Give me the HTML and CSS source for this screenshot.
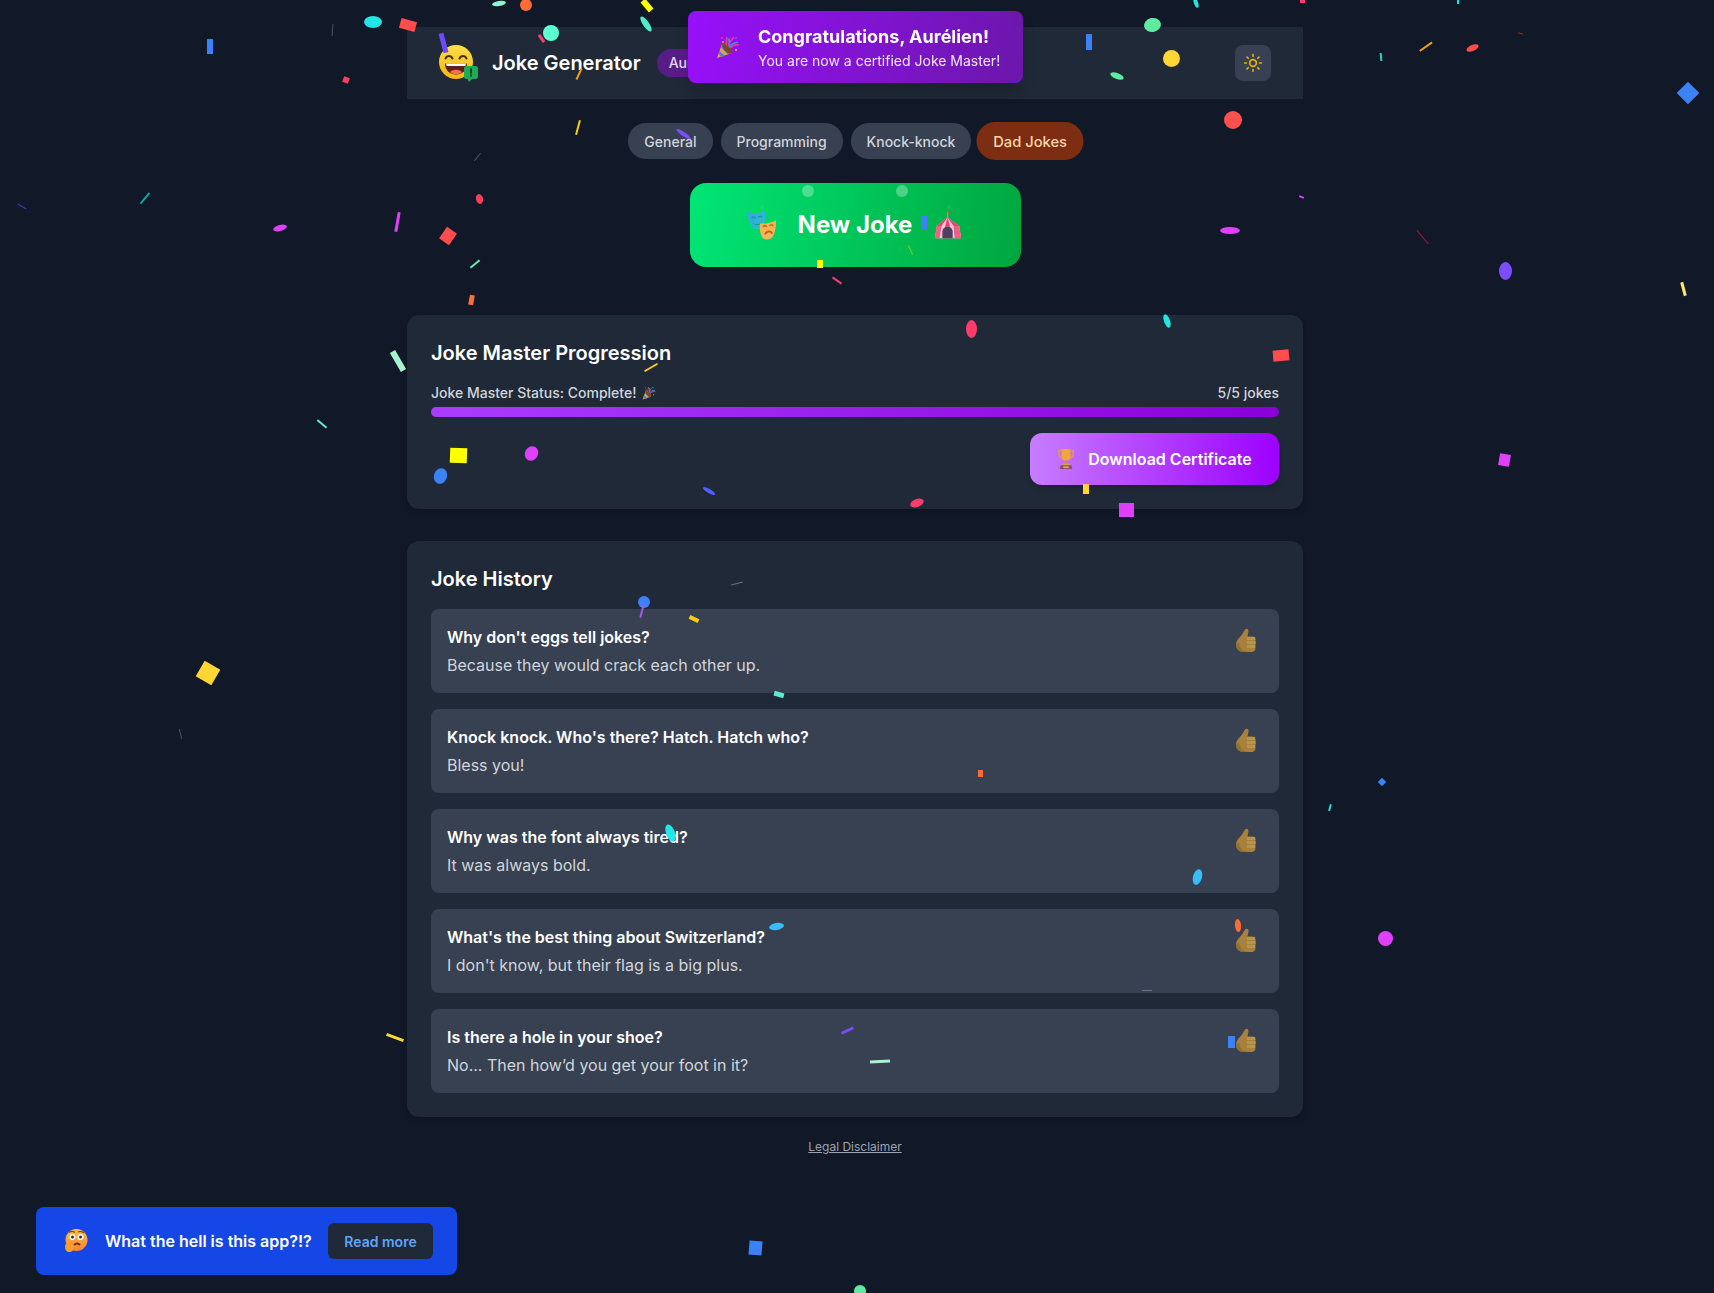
FILE: index.html
```html
<!DOCTYPE html>
<html lang="en">
<head>
<meta charset="utf-8">
<title>Joke Generator</title>
<link rel="stylesheet" href="styles.css">
</head>
<body>
<div class="page">
  <header class="topbar">
    <div class="brand">
      <svg class="logo" viewBox="0 0 40 38" aria-hidden="true">
        <defs><linearGradient id="fc" x1="0" y1="0" x2="0" y2="1"><stop offset="0" stop-color="#fde047"/><stop offset="1" stop-color="#f5b50f"/></linearGradient></defs>
        <circle cx="17" cy="17" r="17" fill="url(#fc)"/>
        <path d="M6.5 13.5c1.5-3.5 5.5-3.5 7 0M20.5 13.5c1.5-3.5 5.500-3.500 7 0" fill="none" stroke="#4a3410" stroke-width="2" stroke-linecap="round"/>
        <path d="M6 18.500h22c0 7-5 11-11 11s-11-4-11-11z" fill="#5b2412"/>
        <path d="M7 18.500h20l-.6 2.500H7.600z" fill="#fff"/>
        <path d="M11 27c3-3 9-3 12 0-3 3-9 3-12 0z" fill="#f0705a"/>
        <rect x="25" y="21" width="14" height="13" rx="2.500" fill="#1faa59"/>
        <path d="M28 33h6l-4 4z" fill="#1faa59"/>
        <rect x="31" y="23.500" width="2" height="5" fill="#0b3d20"/>
        <rect x="31" y="29.500" width="2" height="2" fill="#0b3d20"/>
      </svg>
      <h1 class="brand-title">Joke Generator</h1>
      <span class="user-pill">Aurélien</span>
    </div>
    <button class="theme-btn" aria-label="Toggle theme">
      <svg viewBox="0 0 24 24" class="sun"><circle cx="12" cy="12" r="4"/><path d="M12 2v2M12 20v2M4.900 4.900l1.400 1.400M17.700 17.700l1.400 1.400M2 12h2M20 12h2M4.900 19.100l1.400-1.400M17.700 6.300l1.400-1.400"/></svg>
    </button>
  </header>

  <nav class="tabs">
    <button class="tab">General</button>
    <button class="tab">Programming</button>
    <button class="tab">Knock-knock</button>
    <button class="tab tab-active">Dad Jokes</button>
  </nav>

  <div class="cta-row">
    <button class="cta">
      <svg class="cta-icon" viewBox="0 0 32 32" aria-hidden="true">
        <defs>
          <linearGradient id="mb" x1="0" y1="0" x2="1" y2="1"><stop offset="0" stop-color="#3b9dff"/><stop offset="1" stop-color="#27c4c0"/></linearGradient>
          <linearGradient id="mo" x1="0" y1="0" x2="0" y2="1"><stop offset="0" stop-color="#f4b04a"/><stop offset="1" stop-color="#fbb65c"/></linearGradient>
        </defs>
        <path d="M1 2c6 2 12 2 18-1 1 8 0 14-3 18-3 2-7 2-10 0C3 15 1 9 1 2z" fill="url(#mb)"/>
        <path d="M5 9c1-2 3-2 4 0M12 8c1-2 3-2 4 0" fill="none" stroke="#12a46e" stroke-width="1.500"/>
        <path d="M6 13c2 3 7 3 10-1-1 5-8 6-10 1z" fill="#12a46e"/>
        <path d="M14 14c6 1 11 0 17-3 0 8-1 14-4 18-3 3-7 3-10 1-3-4-4-10-3-16z" fill="url(#mo)"/>
        <path d="M17 18c1-1.500 3-1.500 4 0M24 17c1-1.500 3-1.500 4 0" fill="none" stroke="#b8651c" stroke-width="1.500"/>
        <path d="M19 26c2-4 6-4 8-1" fill="none" stroke="#b8651c" stroke-width="2"/>
      </svg>
      <span class="cta-label">New Joke</span>
      <svg class="cta-icon tent" viewBox="0 0 32 32" aria-hidden="true">
        <path d="M15.500 2v8" stroke="#e0952b" stroke-width="1.200"/>
        <path d="M16 2l4 1.500-4 1.500z" fill="#e8463f"/>
        <path d="M15.500 8L4 17l-2 13h28l-2-13z" fill="#f3c5d6"/>
        <path d="M15.500 8L4 17h5zM15.500 8L13 17h5zM15.500 8L22 17h6z" fill="#ec3f6d"/>
        <path d="M4 17l-2 13h5l2-13zM13 17l-1 13h8l-2-13zM22 17l1 13h7l-2-13z" fill="#ee5f86"/>
        <path d="M10 30v-7a5.500 5.500 0 0 1 11 0v7z" fill="#50405f"/>
      </svg>
    </button>
  </div>

  <section class="card progress-card">
    <h2 class="card-title">Joke Master Progression</h2>
    <div class="status-row">
      <span class="status-text">Joke Master Status: Complete!
        <svg class="inline-popper" viewBox="0 0 24 24" aria-hidden="true"><use href="#popper"/></svg>
      </span>
      <span>5/5 jokes</span>
    </div>
    <div class="bar"></div>
    <div class="cert-row">
      <button class="cert-btn">
        <svg class="trophy" viewBox="0 0 20 24" aria-hidden="true">
          <path d="M2 3h16v3c0 3-2 5-4 5H6C4 11 2 9 2 6z" fill="none" stroke="#e8a13c" stroke-width="1.500"/>
          <path d="M5 1h10v7c0 4-2 6-5 6S5 12 5 8z" fill="#f0a63e"/>
          <path d="M9 13h2v4H9z" fill="#d88a2e"/>
          <path d="M6 17h8v2H6z" fill="#e89b3a"/>
          <path d="M4 19h12l1 4H3z" fill="#8a4f6e"/>
          <rect x="7" y="20.300" width="6" height="1.500" fill="#f0c05a"/>
        </svg>
        Download Certificate
      </button>
    </div>
  </section>

  <section class="card history-card">
    <h2 class="card-title">Joke History</h2>
    <ul class="joke-list">
      <li class="joke"><div><p class="joke-q">Why don't eggs tell jokes?</p><p class="joke-a">Because they would crack each other up.</p></div><svg class="thumb" viewBox="0 0 20 25"><use href="#thumb"/></svg></li>
      <li class="joke"><div><p class="joke-q">Knock knock. Who's there? Hatch. Hatch who?</p><p class="joke-a">Bless you!</p></div><svg class="thumb" viewBox="0 0 20 25"><use href="#thumb"/></svg></li>
      <li class="joke"><div><p class="joke-q">Why was the font always tired?</p><p class="joke-a">It was always bold.</p></div><svg class="thumb" viewBox="0 0 20 25"><use href="#thumb"/></svg></li>
      <li class="joke"><div><p class="joke-q">What's the best thing about Switzerland?</p><p class="joke-a">I don't know, but their flag is a big plus.</p></div><svg class="thumb" viewBox="0 0 20 25"><use href="#thumb"/></svg></li>
      <li class="joke"><div><p class="joke-q">Is there a hole in your shoe?</p><p class="joke-a">No... Then how’d you get your foot in it?</p></div><svg class="thumb" viewBox="0 0 20 25"><use href="#thumb"/></svg></li>
    </ul>
  </section>

  <footer class="legal"><a href="#">Legal Disclaimer</a></footer>
</div>

<svg class="defs" aria-hidden="true">
  <symbol id="thumb" viewBox="0 0 20 25">
    <path d="M9 1.500c1.500-1.500 3.500-.5 3.500 1.500 0 2-1 4-1 5.500h5c2 0 3 1 3 2.500v9c0 2.500-1.500 4-4 4H8C3 24 0 21 0 16.500c0-3 1.500-5 3.500-7C6 7 7.500 4 9 1.500z" fill="#a8813d"/>
    <path d="M11 9h8v3h-8zM11 13h8.500v3H11zM11 17h8v3h-8z" fill="#b8954f"/>
    <path d="M0 16.500C0 21 3 24 8 24h4c-5-1-9-4-9-10z" fill="#94702f"/>
  </symbol>
  <symbol id="popper" viewBox="0 0 24 24">
    <path d="M1 23L6 9l10 9z" fill="#e8a13c"/>
    <path d="M3.500 16l5.500 5-3 1.200-3.700-3.400zM6 9.500l9 8.500-3 1.200L5 12.500z" fill="#4a7fd6"/>
    <ellipse cx="11" cy="13.500" rx="3" ry="6.500" transform="rotate(-43 11 13.500)" fill="#7a4a20"/>
    <path d="M10 10c1-3 0-5 1-8M14 13c3-3 5-4 9-3M12 11c1-3 3-6 6-9" fill="none" stroke-width="1.700" stroke="#e53e8a"/>
    <path d="M13 12c2-3 5-4 9-5M12.500 3.500c1 2 1 4 .5 6" fill="none" stroke-width="1.700" stroke="#2f9be8"/>
    <circle cx="6" cy="3" r="1" fill="#e53e8a"/><circle cx="20" cy="15" r="1" fill="#f0c030"/><circle cx="7" cy="7" r=".9" fill="#f0c030"/><circle cx="20" cy="3" r="1" fill="#7c4dff"/>
  </symbol>
</svg>

<aside class="toast">
  <svg class="toast-icon" viewBox="0 0 24 24" aria-hidden="true"><use href="#popper"/></svg>
  <div>
    <p class="toast-title">Congratulations, Aurélien!</p>
    <p class="toast-sub">You are now a certified Joke Master!</p>
  </div>
</aside>

<aside class="banner">
  <svg class="banner-icon" viewBox="0 0 24 24" aria-hidden="true">
    <defs><linearGradient id="tf" x1="0" y1="0" x2="0" y2="1"><stop offset="0" stop-color="#fcc23f"/><stop offset="1" stop-color="#f5813a"/></linearGradient></defs>
    <circle cx="12.500" cy="11" r="11" fill="url(#tf)"/>
    <circle cx="8.500" cy="8" r="3" fill="#fff"/><circle cx="16.500" cy="8" r="3" fill="#fff"/>
    <circle cx="8.500" cy="8" r="1.500" fill="#3a2410"/><circle cx="16.500" cy="8" r="1.500" fill="#3a2410"/>
    <path d="M5 3.500c2-1.500 4-1.500 6 0M14 3c2-1.200 4-1 6 1" fill="none" stroke="#8a4a18" stroke-width="1.200"/>
    <path d="M10 16c2-2 4-2 6 0" fill="none" stroke="#7a2a10" stroke-width="2"/>
    <path d="M1 17c0-2 2-3 4-3l2-2c1.500 0 1.500 1.500 1 3 1 0 2 1 2 3 0 3-2 5-5 5-3 0-4-3-4-6z" fill="#fb9a2e"/>
  </svg>
  <span class="banner-text">What the hell is this app?!?</span>
  <button class="banner-btn">Read more</button>
</aside>

<div class="confetti" id="confetti"></div>
<script src="script.js"></script>
</body>
</html>
```

FILE: styles.css
```css
* { box-sizing: border-box; }
html, body { height: 100%; }
body {
  margin: 0;
  overflow: hidden;
  background: #111827;
  color: #fff;
  font-family: Inter, "Liberation Sans", sans-serif;
  padding-right: 4px;
}
p, h1, h2, ul { margin: 0; padding: 0; }
button { font-family: inherit; border: 0; cursor: pointer; }
.defs { position: absolute; width: 0; height: 0; }

.page { width: 896px; margin: 0 auto; padding-top: 27px; }

.topbar {
  height: 72px;
  display: flex;
  align-items: center;
  justify-content: space-between;
  padding: 0 32px;
  background: #1f2937;
}
.brand { display: flex; align-items: center; }
.logo { width: 40px; height: 38px; margin-top: 2px; }
.brand-title { font-size: 20px; line-height: 28px; font-weight: 600; margin-left: 13px; }
.user-pill {
  margin-left: 16px;
  height: 28px;
  padding: 0 12px;
  border-radius: 14px;
  background: #581c87;
  color: #e9d5ff;
  font-size: 14px;
  font-weight: 500;
  line-height: 28px;
}
.theme-btn {
  width: 36px;
  height: 36px;
  padding: 8px;
  border-radius: 8px;
  background: #374151;
  display: flex;
}
.sun { width: 20px; height: 20px; fill: none; stroke: #eab308; stroke-width: 2; stroke-linecap: round; }

.tabs { display: flex; justify-content: center; gap: 8px; margin-top: 24px; height: 36px; }
.tab {
  height: 36px;
  padding: 0 16px;
  border-radius: 18px;
  background: #374151;
  color: #d1d5db;
  font-size: 14px;
  font-weight: 500;
}
.tab-active { background: #7c2d12; color: #fed7aa; transform: scale(1.05); margin-left: 0; }

.cta-row { display: flex; justify-content: center; margin-top: 24px; }
.cta {
  width: 331px;
  height: 84px;
  display: flex;
  align-items: center;
  justify-content: center;
  gap: 21px;
  border-radius: 16px;
  background: linear-gradient(100deg, #00e676, #00a63e);
  color: #fff;
  font-size: 24px;
  font-weight: 700;
}
.cta-icon { width: 30px; height: 30px; }
.tent { margin-left: 0; }
.cta-label { line-height: 32px; }

.card {
  background: #1f2937;
  border-radius: 12px;
  padding: 24px;
  box-shadow: 0 4px 6px -1px rgba(0,0,0,.1), 0 2px 4px -2px rgba(0,0,0,.1);
}
.progress-card { margin-top: 48px; }
.history-card { margin-top: 32px; }
.card-title { font-size: 20px; line-height: 28px; font-weight: 600; margin-bottom: 16px; }

.status-row {
  display: flex;
  justify-content: space-between;
  font-size: 14px;
  line-height: 20px;
  font-weight: 500;
  color: #d1d5db;
  margin-bottom: 4px;
}
.inline-popper { width: 14px; height: 14px; vertical-align: -2px; margin-left: 2px; }
.bar { height: 10px; border-radius: 5px; background: linear-gradient(90deg, #a93dff, #8a00d8); }
.cert-row { display: flex; justify-content: flex-end; margin-top: 16px; }
.cert-btn {
  height: 52px;
  width: 249px;
  display: flex;
  align-items: center;
  justify-content: center;
  gap: 13px;
  border-radius: 12px;
  background: linear-gradient(90deg, #c77dff, #9d00ff);
  color: #fff;
  font-size: 16px;
  font-weight: 600;
  box-shadow: 0 4px 6px -1px rgba(0,0,0,.15);
}
.trophy { width: 18px; height: 22px; }

.joke-list { list-style: none; display: flex; flex-direction: column; gap: 16px; }
.joke {
  height: 84px;
  padding: 16px;
  border-radius: 8px;
  background: #374151;
  display: flex;
  justify-content: space-between;
  align-items: flex-start;
}
.joke-q { font-size: 16px; line-height: 24px; font-weight: 600; color: #fff; margin-bottom: 4px; }
.joke-a { font-size: 16px; line-height: 24px; color: #d1d5db; }
.thumb { width: 20px; height: 25px; margin: 3px 7px 0 0; }

.legal { margin-top: 20px; text-align: center; font-size: 12px; line-height: 20px; }
.legal a { color: #9ca3af; text-decoration: underline; }

.toast {
  position: fixed;
  top: 11px;
  left: 688px;
  width: 335px;
  height: 72px;
  z-index: 30;
  display: flex;
  align-items: center;
  gap: 18px;
  padding: 0 24px 0 28px;
  border-radius: 8px;
  background: linear-gradient(100deg, #9810fa, #6b17ab);
  box-shadow: 0 10px 15px -3px rgba(0,0,0,.2);
}
.toast-icon { width: 24px; height: 24px; flex: none; }
.toast-title { font-size: 18px; line-height: 28px; font-weight: 700; white-space: nowrap; }
.toast-sub { font-size: 14px; line-height: 20px; color: #f3e8ff; white-space: nowrap; }

.banner {
  position: fixed;
  left: 36px;
  bottom: 18px;
  width: 421px;
  height: 68px;
  z-index: 20;
  display: flex;
  align-items: center;
  padding: 0 24px 0 28px;
  border-radius: 8px;
  background: #1547e6;
}
.banner-icon { width: 24px; height: 24px; flex: none; }
.banner-text { margin-left: 17px; font-size: 16px; font-weight: 600; white-space: nowrap; }
.banner-btn {
  margin-left: auto;
  height: 36px;
  width: 105px;
  border-radius: 6px;
  background: #1f2937;
  color: #60a5fa;
  font-size: 14px;
  font-weight: 600;
}

.confetti { position: fixed; inset: 0; z-index: 25; pointer-events: none; overflow: hidden; }
.bit { position: absolute; }
.bit-round { border-radius: 50%; }
```

FILE: script.js
```js
// Confetti snapshot: [centre x, centre y, width, height, rotation, colour, round?]
var bits = [
  [373,22,18,12,0,'#22e6e6',1],[408,25,16,10,15,'#ff4d4d'],[210,46,6,15,0,'#3b82f6'],[332,30,1,12,5,'#475569'],
  [346,80,6,6,20,'#f43f5e'],[499,3,14,5,-10,'#8ff5cf',1],[526,5,12,12,0,'#ff6b35',1],[647,5,6,13,-40,'#ffff00'],
  [646,24,6,18,-35,'#4eeec8',1],[551,33,16,16,0,'#5effd0',1],[541,38,3,9,-35,'#f43f75'],[443,43,5,20,-15,'#6d4aff'],
  [579,74,1.5,12,25,'#f59e0b'],[578,127,2,15,15,'#facc15'],[683,134,17,4,35,'#7c4dff',1],[477,157,1,10,40,'#475569'],
  [1089,42,6,16,0,'#3b82f6'],[1152,25,17,14,-10,'#5eeaa0',1],[1171,58,17,17,0,'#ffd633',1],[1117,76,14,6,20,'#5eeaa0',1],
  [1233,120,18,18,0,'#ff5050',1],[1196,3,4,10,-20,'#22e6e6',1],[1302,1,5,3,0,'#f43f75'],[1458,1,2,5,0,'#22e6e6'],
  [1381,57,2,8,-5,'#2dd4bf'],[1426,46,1.5,15,55,'#f59e0b'],[1472,48,13,6,-25,'#ff4d4d',1],[1520,33,5,1,15,'#b91c1c'],
  [1688,93,16,16,45,'#3b82f6'],[22,206,10,1,30,'#4338ca'],[145,198,1.5,14,40,'#0ea5a5'],[280,228,14,6,-15,'#e040fb',1],
  [397,222,3,20,10,'#e040fb'],[479,199,7,10,-15,'#f43f5e',1],[448,236,12,14,35,'#ff4d4d'],[475,264,2,12,50,'#6ee7b7'],
  [471,300,5,10,10,'#ff6b35'],[1230,230,20,7,0,'#e040fb',1],[1301,197,5,2,20,'#e040fb'],[1422,237,1,18,-40,'#9f1239'],
  [1505,271,13,18,0,'#7c4dff',1],[1683,289,3,14,-15,'#ffe66d'],[971,329,11,18,0,'#ff3b6b',1],[1167,321,6,14,-20,'#22e6e6',1],
  [1281,355,16,11,-5,'#ff4d4d'],[398,361,6,22,-30,'#a7f3d0'],[322,424,1.5,12,-50,'#5eead4'],[651,367,2,15,60,'#facc15'],
  [458,455,17,15,2,'#ffff00'],[531,453,13,15,30,'#e040fb',1],[440,476,13,16,20,'#3b82f6',1],[709,491,14,4,30,'#4f5fff',1],
  [917,503,14,8,-20,'#ff3b6b',1],[1086,489,6,10,0,'#ffd633'],[1126,510,15,14,0,'#e040fb'],[1504,460,11,12,10,'#e040fb'],
  [737,583,12,1,-15,'#64748b'],[644,602,12,12,0,'#3b82f6',1],[642,611,2,14,15,'#a855f7'],[694,619,10,4,25,'#facc15'],
  [779,694,10,5,15,'#5eead4'],[208,673,18,18,30,'#ffd633'],[180,734,1,10,-15,'#475569'],[980,773,5,7,0,'#ff6b35'],
  [1382,782,6,6,45,'#3b82f6'],[1330,807,1.5,7,15,'#2dd4bf'],[670,833,9,18,-20,'#22e6e6',1],[1197,877,9,16,15,'#38bdf8',1],
  [776,926,15,7,-10,'#38bdf8',1],[1238,925,6,13,-5,'#ff6b35',1],[1385,938,15,15,0,'#e040fb',1],[1147,990,10,1,0,'#64748b'],
  [395,1037,18,3,20,'#ffd633'],[847,1030,13,3,-25,'#7c4dff'],[880,1061,20,3,-3,'#a7f3d0'],[1231,1042,7,12,0,'#3b82f6'],
  [755,1248,13,14,5,'#3b82f6'],[860,1291,12,12,0,'#5eeaa0',1],
  [924,223,6,14,0,'#3b82f6'],[820,264,6,8,0,'#ffff00'],[837,280,2,11,-55,'#f43f75'],[910,250,1,10,-25,'#84cc16'],
  [808,191,12,12,0,'rgba(255,255,255,.3)',1],[902,191,12,12,0,'rgba(255,255,255,.3)',1],
  [762,207,4,4,0,'rgba(255,255,255,.08)',1],[949,207,4,4,0,'rgba(255,255,255,.08)',1]
];
var layer = document.getElementById('confetti');
bits.forEach(function (b) {
  var el = document.createElement('i');
  el.className = 'bit' + (b[6] ? ' bit-round' : '');
  el.style.left = (b[0] - b[2] / 2) + 'px';
  el.style.top = (b[1] - b[3] / 2) + 'px';
  el.style.width = b[2] + 'px';
  el.style.height = b[3] + 'px';
  el.style.transform = 'rotate(' + b[4] + 'deg)';
  el.style.background = b[5];
  layer.appendChild(el);
});
```
